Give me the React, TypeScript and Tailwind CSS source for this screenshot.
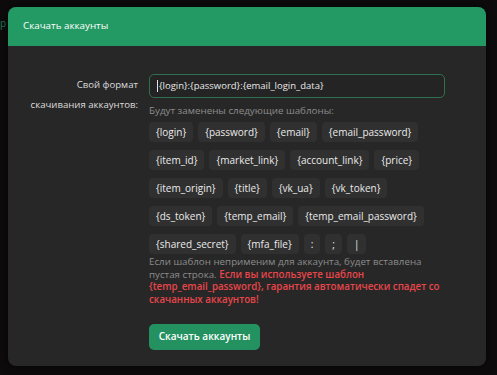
import React from "react";

const TEMPLATES = [
  "{login}",
  "{password}",
  "{email}",
  "{email_password}",
  "{item_id}",
  "{market_link}",
  "{account_link}",
  "{price}",
  "{item_origin}",
  "{title}",
  "{vk_ua}",
  "{vk_token}",
  "{ds_token}",
  "{temp_email}",
  "{temp_email_password}",
  "{shared_secret}",
  "{mfa_file}",
  ":",
  ";",
  "|",
];

function BackgroundPage() {
  // faint page content behind the overlay
  return (
    <div className="flex h-[375px] w-[497px] justify-between bg-[#0d0b0c] text-[10px] text-[#5a5a5a]">
      <div className="pt-[16px] text-[#1f7a50]">р</div>
      <div className="flex w-[30px] flex-col gap-[13px] pt-[206px] leading-[14px]">
        <span>т с</span>
        <span>а .</span>
        <span>ат</span>
        <span>ть</span>
        <span>Ть</span>
        <span>ое</span>
      </div>
    </div>
  );
}

export default function App() {
  return (
    <div className="relative h-[375px] w-[497px] overflow-hidden font-['Open_Sans',sans-serif]">
      <BackgroundPage />

      <div className="absolute left-[8px] top-[7px] w-[478px] overflow-hidden rounded-[8px] bg-[#272727] shadow-[0_0_8px_rgba(0,0,0,0.6)]">
        {/* Header */}
        <div className="flex h-[39px] items-center bg-[#239a64] px-[15px] text-[9.8px] text-white">
          Скачать аккаунты
        </div>

        {/* Body */}
        <div className="flex gap-[11px] pb-[16px] pt-[28px]">
          <div className="w-[130px] pt-[1px] text-right text-[9.6px] leading-[20px] text-[#dcdcdc]">
            Свой формат
            <br />
            скачивания аккаунтов:
          </div>

          <div className="flex w-[296px] flex-col">
            <div className="flex h-[24px] items-center rounded-[5px] border border-[#2f7050] bg-[#242424] px-[7px] text-[9.5px] text-[#e8e8e8]">
              <span className="mr-[1px] h-[12px] w-px bg-[#e4e4e4]" />
              {"{login}:{password}:{email_login_data}"}
            </div>

            <div className="mt-[5px] text-[9.8px] leading-[15px] text-[#8c8c8c]">
              Будут заменены следующие шаблоны:
            </div>

            <div className="mt-[4px] flex flex-wrap gap-x-[5px] gap-y-[8px]">
              {TEMPLATES.map((t) => (
                <span
                  key={t}
                  className="flex h-[20px] items-center rounded-[4px] bg-[#303030] px-[7px] text-[10px] text-[#ebebeb]"
                >
                  {t}
                </span>
              ))}
            </div>

            <div className="mt-[2px] text-[9.75px] leading-[12.7px] text-[#8c8c8c]">
              Если шаблон неприменим для аккаунта, будет вставлена пустая строка.{" "}
              <span className="font-semibold text-[#e8464a]">
                Если вы используете шаблон {"{temp_email_password}"}, гарантия автоматически спадет со
                скачанных аккаунтов!
              </span>
            </div>

            <button
              type="button"
              className="mt-[17px] h-[26px] w-[111px] rounded-[5px] bg-[#239160] text-[10px] font-semibold text-white"
            >
              Скачать аккаунты
            </button>
          </div>
        </div>
      </div>
    </div>
  );
}
